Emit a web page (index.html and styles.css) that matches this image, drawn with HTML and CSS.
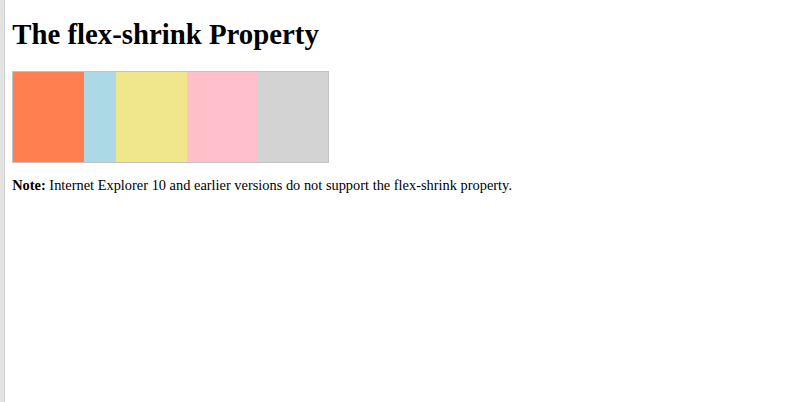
FILE: index.html
```html
<!DOCTYPE html>
<html>
<head>
<meta charset="utf-8">
<link rel="stylesheet" href="styles.css">
</head>
<body>
<h1 class="title">The flex-shrink Property</h1>
<div class="main">
  <div class="item coral"></div>
  <div class="item blue shrink3"></div>
  <div class="item khaki"></div>
  <div class="item pink"></div>
  <div class="item grey"></div>
</div>
<p class="note"><b>Note:</b> Internet Explorer 10 and earlier versions do not support the flex-shrink property.</p>
</body>
</html>
```
FILE: styles.css
```css
html {
  padding-left: 5px;
  background: linear-gradient(to right, #e3e3e3 0 4px, #d2d2d2 4px 5px, #ffffff 5px);
  min-height: 100%;
}
body {
  margin: 7.2px;
  font-family: "Liberation Serif", "Times New Roman", serif;
  font-size: 14.4px;
  color: #000;
}
.title {
  font-size: 28.8px;
  font-weight: bold;
  margin: 11.3px 0 19.3px;
}
.main {
  width: 315px;
  height: 90px;
  border: 1px solid #c3c3c3;
  display: flex;
}
.item {
  flex-grow: 1;
  flex-shrink: 1;
  flex-basis: 90px;
}
.shrink3 { flex-shrink: 3; }
.coral { background: coral; }
.blue { background: lightblue; }
.khaki { background: khaki; }
.pink { background: pink; }
.grey { background: lightgrey; }
.note {
  margin: 14.4px 0;
}
```
